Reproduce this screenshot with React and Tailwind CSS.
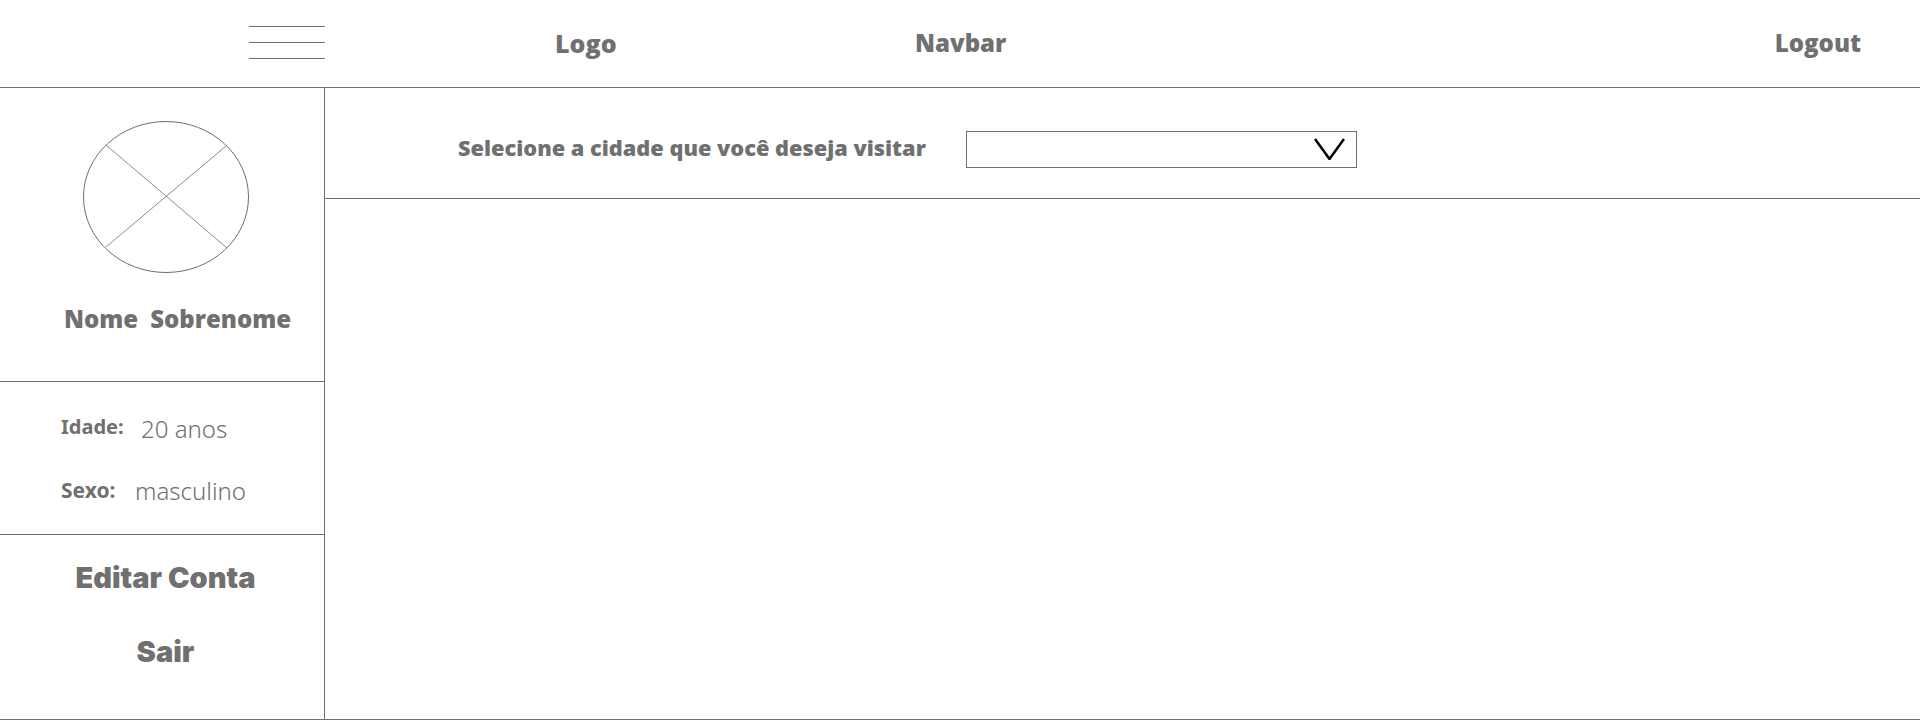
export default function App() {
  return (
    <div className="w-[1920px] h-[720px] bg-white text-[#707070] font-['Open_Sans',sans-serif] flex flex-col overflow-hidden">
      <header className="h-[88px] shrink-0 border-b border-[#707070] flex items-center text-[24px] leading-[32px] font-extrabold">
        <div className="ml-[249px] w-[76px] flex flex-col gap-[15px] mb-[3px]">
          <div className="h-px bg-[#707070]" />
          <div className="h-px bg-[#707070]" />
          <div className="h-px bg-[#707070]" />
        </div>
        <span className="ml-[230px] w-[60px] mt-[-1px] text-[25px]">Logo</span>
        <span className="ml-[300px] mt-[-1px]">Navbar</span>
        <span className="ml-auto mr-[59px] mt-[-1px]">Logout</span>
      </header>
      <div className="flex h-[632px] border-b border-[#707070]">
        <aside className="w-[325px] shrink-0 border-r border-[#707070] flex flex-col">
          <div className="h-[294px] shrink-0 border-b border-[#707070] pt-[33px] flex flex-col">
            <svg className="ml-[83px] shrink-0" width="167" height="153" viewBox="0 0 167 153" fill="none" stroke="#707070" strokeWidth="1">
              <ellipse cx="83" cy="76" rx="82.5" ry="75.5" />
              <path d="M23 24 L144 127 M143 25 L23 126" strokeWidth="0.8" />
            </svg>
            <div className="ml-[64px] mt-[28px] flex gap-[12px] text-[24px] leading-[34px] font-extrabold whitespace-nowrap">
              <span>Nome</span><span>Sobrenome</span>
            </div>
          </div>
          <div className="h-[153px] shrink-0 border-b border-[#707070] pl-[61px] pt-[29px] flex flex-col gap-[30px] font-['Noto_Sans']">
            <div className="flex items-center h-[33px]">
              <span className="w-[80px] text-[20px] font-bold mt-[-2px]">Idade:</span>
              <span className="text-[24px] font-light mt-[3px]">20 anos</span>
            </div>
            <div className="flex items-center h-[33px]">
              <span className="w-[74px] text-[21px] font-bold">Sexo:</span>
              <span className="text-[24px] font-light">masculino</span>
            </div>
          </div>
          <div className="flex flex-col items-center pl-[7px] pt-[22px] gap-[33px] text-[29px] leading-[41px] font-black font-['Inter']">
            <span>Editar Conta</span>
            <span>Sair</span>
          </div>
        </aside>
        <main className="flex-1">
          <div className="h-[111px] border-b border-[#707070] flex items-start pt-[43px]">
            <span className="ml-[133px] w-[508px] text-[21.75px] leading-[30px] font-extrabold whitespace-nowrap mt-[2px]">Selecione a cidade que você deseja visitar</span>
            <div className="w-[391px] h-[37px] border border-[#707070] flex items-center justify-end pr-[11px] pb-[2px]">
              <svg width="31" height="22" viewBox="0 0 31 22" fill="none" stroke="#000" strokeWidth="2.5">
                <path d="M1 1 L15.5 21 L30 1" />
              </svg>
            </div>
          </div>
        </main>
      </div>
    </div>
  );
}
